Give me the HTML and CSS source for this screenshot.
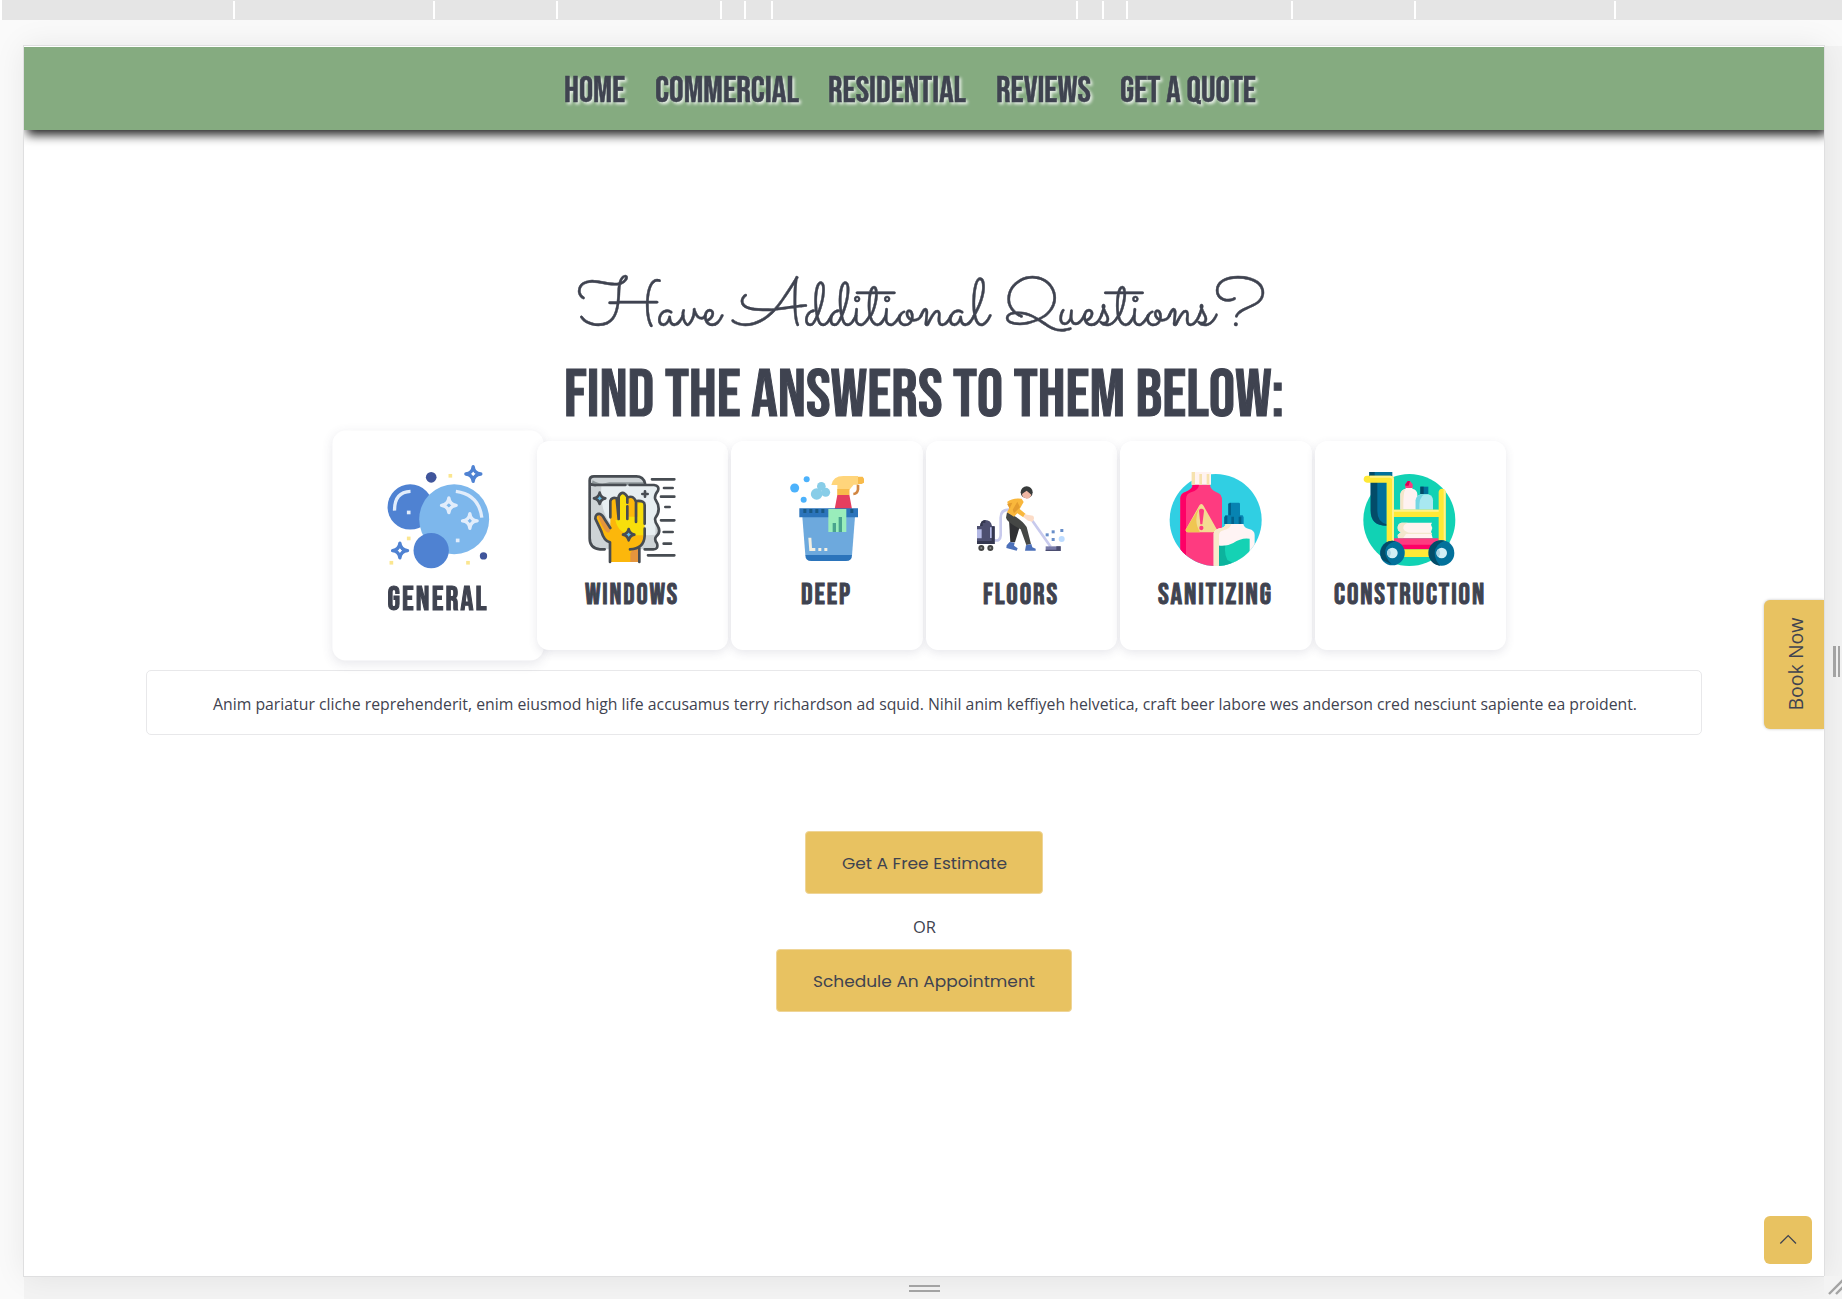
FILE: index.html
```html
<!DOCTYPE html>
<html lang="en">
<head>
<meta charset="utf-8">
<title>Cleaning Services - FAQ</title>
<link rel="stylesheet" href="styles.css">
</head>
<body>
<div class="ruler">
  <svg width="1842" height="20"><path class="tick" d="M1 0V20M234 1V19M434 1V19M557 1V19M721 1V19M745 1V19M772 1V19M1077 1V19M1103 1V19M1127 1V19M1292 1V19M1415 1V19M1615 1V19"/></svg>
</div>
<div class="stage">
  <div class="page">
    <header class="navbar">
      <a><svg width="61" height="30"><text y="27" textLength="61" lengthAdjust="spacingAndGlyphs">HOME</text></svg></a>
      <a><svg width="144" height="30"><text y="27" textLength="144" lengthAdjust="spacingAndGlyphs">COMMERCIAL</text></svg></a>
      <a><svg width="138" height="30"><text y="27" textLength="138" lengthAdjust="spacingAndGlyphs">RESIDENTIAL</text></svg></a>
      <a><svg width="95" height="30"><text y="27" textLength="95" lengthAdjust="spacingAndGlyphs">REVIEWS</text></svg></a>
      <a><svg width="136" height="30"><text y="27" textLength="136" lengthAdjust="spacingAndGlyphs">GET A QUOTE</text></svg></a>
    </header>
    <main>
      <h2 class="script"><svg width="1800" height="100" viewBox="24 250 1800 100">
        <text x="578" y="325" textLength="688" lengthAdjust="spacingAndGlyphs">Have Additional Questions?</text>
      </svg></h2>
      <h1 class="headline"><svg width="1800" height="91" viewBox="24 350 1800 91">
        <text x="564" y="416" textLength="720" lengthAdjust="spacingAndGlyphs">FIND THE ANSWERS TO THEM BELOW:</text>
      </svg></h1>
      <div class="cards">
        <div class="card active">
          <svg class="icon" viewBox="197 132 317 317">
            <circle cx="272" cy="259" r="68" fill="#4f82d2"/>
            <path d="M225 270Q224 214 273 212" fill="none" stroke="#e2edfb" stroke-width="10"/>
            <rect x="262" y="270" width="11" height="11" fill="#e2edfb"/>
            <circle cx="404" cy="296" r="105" fill="#7db7ec"/>
            <path d="M409 212Q478 221 487 291" fill="none" stroke="#e2edfb" stroke-width="10"/>
            <rect x="409" y="354" width="11" height="11" fill="#e2edfb"/>
            <circle cx="335" cy="390" r="53" fill="#4f82d2"/>
            <circle cx="335" cy="170" r="16" fill="#40559b"/><circle cx="492" cy="406" r="11" fill="#40559b"/>
            <g fill="#fbe68f"><rect x="387" y="160" width="11" height="11"/><rect x="262" y="348" width="11" height="11"/><rect x="210" y="421" width="11" height="11"/><rect x="440" y="421" width="11" height="11"/></g>
            <g fill="none" stroke="#4f82d2" stroke-width="10" stroke-linejoin="round"><path d="M461 138Q463 158 484 160Q463 162 461 182Q459 162 439 160Q459 158 461 138Z"/><path d="M241 368Q243 388 264 390Q243 392 241 412Q239 392 219 390Q239 388 241 368Z"/></g>
            <g fill="none" stroke="#e2edfb" stroke-width="10" stroke-linejoin="round"><path d="M388 232Q390 252 410 254Q390 256 388 276Q386 256 366 254Q386 252 388 232Z"/><path d="M451 279Q453 299 473 301Q453 303 451 323Q449 303 429 301Q449 299 451 279Z"/></g>
            <g fill="#fff"><circle cx="461" cy="160" r="4"/><circle cx="241" cy="390" r="4"/></g>
            <g fill="#7db7ec"><circle cx="388" cy="254" r="4"/><circle cx="451" cy="301" r="4"/></g>
          </svg>
          <svg class="label" width="92" height="30"><text y="25" textLength="92" lengthAdjust="spacingAndGlyphs">GENERAL</text></svg>
        </div>
        <div class="card">
          <svg class="icon" viewBox="794 156 288 288">
            <path d="M811 181V355Q811 388 842 388H1009Q1019 380 1013 370Q1002 360 1010 350Q1026 336 1017 322Q1004 308 1008 296Q1028 268 1016 248Q1004 236 1009 226Q1024 208 1011 196H978Q974 169 951 169H824Q811 169 811 181Z" fill="#cdd3d6"/>
            <path d="M846 198H1010Q1018 208 1008 226L1006 238Q1023 262 1009 292L1008 344Q960 350 900 330Q840 300 846 198Z" fill="#e7eef1"/>
            <path d="M820 181Q840 196 870 187H973V195H816Z" fill="#8f989b"/>
            <path d="M872 426V365Q854 357 848 333L829 290Q835 277 848 286L873 324V241Q884 222 897 238V226Q911 207 924 229Q940 224 949 244Q966 235 975 250V348Q974 370 960 381V426Z" fill="#fcb70b"/>
            <path d="M888 300Q896 344 947 346H975V250Q962 240 955 254V290H925V226Q911 207 900 229V300Z" fill="#f8df0b"/>
            <path d="M933 426V400Q937 388 960 380V426ZM836 286Q848 279 856 298L872 322Q874 344 861 335Q850 328 836 286Z" fill="#e4953d"/>
            <g fill="none" stroke="#474c52" stroke-width="8" stroke-linecap="round" stroke-linejoin="round">
              <path d="M856 388H842Q811 386 811 355V181Q811 169 824 169H951Q972 169 977 190M814 192Q819 196 832 195H918M931 195H1004Q1021 197 1016 212Q1004 228 1008 238Q1028 268 1008 294Q1005 302 1014 316Q1027 336 1010 350Q1004 359 1013 370Q1018 388 1002 388H976"/>
              <path d="M872 426V367Q854 363 846 334L828 296Q828 280 842 282Q850 284 856 298L873 324M873 292V243Q877 230 892 235L898 297V229Q909 208 924 230V248M924 259V297M925 233Q942 224 950 245V306M952 243Q976 241 976 255V311M976 326V348Q974 386 932 388M960 384V426"/>
              <path d="M998 178H1065M1034 204H1060M1025 230H1065M1038 261H1051M1025 301H1065M1033 336H1060M1033 371H1055M986 406H1065M977 214V230M969 222H985"/>
            </g>
            <g fill="#62bce9" stroke="#474c52" stroke-width="8" stroke-linejoin="round"><path d="M841 218Q844 232 858 235Q844 238 841 252Q838 238 824 235Q838 232 841 218Z"/><path d="M928 327Q931 341 945 344Q931 347 928 361Q925 347 911 344Q925 341 928 327Z"/></g>
          </svg>
          <svg class="label" width="94" height="30"><text y="25" textLength="94" lengthAdjust="spacingAndGlyphs">WINDOWS</text></svg>
        </div>
        <div class="card">
          <svg class="icon" viewBox="176 126 288 288">
            <g fill="#4cb2fc"><circle cx="223" cy="174" r="13.500"/><circle cx="259" cy="148" r="9"/><circle cx="250" cy="209" r="9"/></g>
            <g fill="#88cde8"><circle cx="289" cy="192" r="17.500"/><circle cx="303" cy="169" r="13"/><circle cx="316" cy="187" r="13.500"/></g>
            <path d="M351 194H387L395 237H343Z" fill="#e53f5f"/>
            <path d="M333 165Q338 138 369 138H413V164H400L387 180V194H351V165Z" fill="#ffd57b"/>
            <path d="M351 177H387V195H351ZM413 140H427L431 146V158L424 162H413Z" fill="#f8bb4b"/>
            <path d="M413 164V178Q411 191 399 192" fill="none" stroke="#d18641" stroke-width="8"/>
            <path d="M246 260H404L395 376H255Z" fill="#6da9dd"/>
            <path d="M255 375H395Q395 393 377 393H273Q255 393 255 375ZM237 235H413V262H237Z" fill="#2b74bb"/>
            <path d="M249 237h9v12h-9zM267 237h9v12h-9zM285 237h9v12h-9zM303 237h9v12h-9zM390 237h9v12h-9z" fill="#195985"/>
            <path d="M324 237H378V306H324Z" fill="#99edbb"/>
            <path d="M337 279h10v27h-10zM355 261h10v45h-10z" fill="#49a38e"/>
            <path d="M264 323H273L275 354H285V363H267ZM294 354h9v9h-9zM312 354h9v9h-9z" fill="#f4f0e2"/>
          </svg>
          <svg class="label" width="51" height="30"><text y="25" textLength="51" lengthAdjust="spacingAndGlyphs">DEEP</text></svg>
        </div>
        <div class="card">
          <svg class="icon" viewBox="760 126 288 288">
            <path d="M822 330Q842 336 843 316V263Q843 239 868 239" fill="none" stroke="#c8caed" stroke-width="8"/>
            <path d="M781 288Q783 270 797 270Q814 270 817 288H825V342H772V288Z" fill="#4d4f70"/>
            <path d="M816 290H825V342H772V333H816ZM781 288Q783 270 797 270V279H789V288Z" fill="#34374f"/>
            <path d="M772 298h14v27h-14zM811 292h5v32h-5z" fill="#b4b9e5"/>
            <g fill="#8b8d8c" stroke="#444545" stroke-width="6"><circle cx="785" cy="354" r="6"/><circle cx="812" cy="354" r="6"/></g>
            <path d="M938 272L993 350" stroke="#c8caed" stroke-width="8"/>
            <path d="M978 349h45v14h-45z" fill="#777aa7"/><path d="M1010 349h13v14h-45v-4h32z" fill="#4b4d70"/>
            <path d="M868 270L872 337H886L901 288Z" fill="#303134"/>
            <path d="M862 247L859 263Q861 276 903 298L920 345L934 342L921 291Q909 272 883 257Z" fill="#454745"/>
            <path d="M870 336L885 338L883 347L894 355L891 362L860 354L861 346ZM919 346L935 342L938 352L948 356V362H916Z" fill="#4c70b9"/>
            <path d="M862 216Q878 203 906 206L912 216L900 237L918 252L911 262L893 250L883 260L862 247L872 229Z" fill="#f9b73c"/>
            <path d="M893 215L901 232L883 250L879 239ZM862 221L870 236L878 218Z" fill="#e49c2e"/>
            <path d="M915 253L940 257Q947 264 938 275L925 272L911 261Z" fill="#fcdcc7"/>
            <circle cx="921" cy="187" r="18" fill="#383b3b"/><path d="M910 190L921 182L935 194Q932 205 922 206Q908 204 907 193Z" fill="#efb7a4"/>
            <g fill="#688ec9"><rect x="978" y="310" width="9" height="9"/><rect x="996" y="301" width="9" height="9"/><rect x="996" y="324" width="9" height="9"/><rect x="1022" y="297" width="9" height="9"/></g><circle cx="1026" cy="327" r="9" fill="#bddcff"/>
          </svg>
          <svg class="label" width="76" height="30"><text y="25" textLength="76" lengthAdjust="spacingAndGlyphs">FLOORS</text></svg>
        </div>
        <div class="card">
          <svg class="icon" viewBox="174 126 288 288">
            <defs><clipPath id="round-a"><path d="M179 120H334V200H455V270A138 138 0 0 1 179 270Z"/></clipPath></defs>
            <circle cx="317" cy="270" r="138" fill="#30cfe3"/>
            <g clip-path="url(#round-a)">
              <path d="M211 420V205Q211 190 228 185Q248 178 248 163H300Q300 178 318 186Q336 192 336 207V420Z" fill="#fe3b80"/>
              <path d="M211 420V205Q211 190 228 185Q248 178 248 163H267Q268 180 243 187Q229 191 228 207V420Z" fill="#fe0066"/>
              <path d="M245 126H303V164H245Z" fill="#fff3f1"/><path d="M245 126h10v38h-10zM268 132h8v32h-8zM290 132h8v32h-8z" fill="#f6e2ae"/>
              <path d="M274 222Q278 222 281 228L322 301Q321 307 315 307H233Q226 305 227 299L267 228Q270 222 274 222Z" fill="#f4dc91"/>
              <path d="M274 222Q246 268 270 307H233Q226 305 227 299Z" fill="#efc652"/>
              <path d="M267 242Q267 236 274 236Q282 236 282 242L277 283H271Z" fill="#fe3b80"/><circle cx="274" cy="294" r="6.500" fill="#fe3b80"/>
              <path d="M311 420V310Q314 299 329 295Q346 292 347 282H400Q402 294 417 297Q434 301 434 315V420Z" fill="#fff4f4"/>
              <path d="M311 420V310Q314 299 329 295Q346 292 347 282H364Q361 296 341 301Q327 304 327 316V420Z" fill="#f7e9cb"/>
              <path d="M327 347Q350 350 370 339Q394 322 419 326V420H327Z" fill="#15d2b4"/><path d="M327 347H346Q342 370 352 390L370 400V420H327Z" fill="#0cb39d"/>
              <path d="M355 222Q355 218 360 218H386Q390 218 390 222V256H398L401 262V282H343V262L346 256H355Z" fill="#0783b2"/><path d="M355 222L363 218V256H355ZM343 262L346 257H352V282H343ZM364 260h8v22h-8zM386 260h8v22h-8z" fill="#02618a"/>
            </g>
          </svg>
          <svg class="label" width="115" height="30"><text y="25" textLength="115" lengthAdjust="spacingAndGlyphs">SANITIZING</text></svg>
        </div>
        <div class="card">
          <svg class="icon" viewBox="758 126 288 288">
            <circle cx="900" cy="270" r="138" fill="#11d2b4"/>
            <path d="M784 156H832V287Q784 287 784 242Z" fill="#02719b"/><path d="M784 156H804V244Q804 276 832 283V287Q784 287 784 242Z" fill="#034c69"/>
            <path d="M780 126H849V140H780Z" fill="#02719b"/><path d="M780 126h16v12h-16z" fill="#034c69"/>
            <path d="M873 239V193Q874 180 889 176V172H909V176Q924 180 924 193V239Z" fill="#fff2f1"/><path d="M873 239V193Q874 182 888 178Q881 188 882 239Z" fill="#f5e6ca"/>
            <path d="M888 174V163L895 153H902L910 163V174Z" fill="#fe3b80"/><path d="M888 163L895 153H902L898 167H888Z" fill="#da0055"/>
            <path d="M919 239V211Q920 198 934 193H957Q971 198 971 211V239Z" fill="#a8e8f1"/><path d="M919 239V211Q920 198 937 193H945Q928 202 930 239Z" fill="#76d6e3"/><path d="M933 170h24v22h-24z" fill="#02719b"/><path d="M933 170h10v22h-10z" fill="#034c69"/>
            <path d="M877 278H968L965 284L969 294L965 306L970 325H866L865 315L875 306Q864 304 865 291Q866 280 877 278Z" fill="#fff3ef"/>
            <path d="M877 278H895Q880 284 882 296Q887 307 905 308H968V312H890L881 325H866L865 315L875 306Q864 304 865 291Q866 280 877 278Z" fill="#f3e7cc"/>
            <path d="M853 325H988V347H853Z" fill="#fe3b80"/><path d="M853 344H988V358H853Z" fill="#fe0066"/>
            <path d="M885 358H965V381H885Z" fill="#ffe936"/>
            <path d="M773 137H843Q854 137 854 148V340H832V158H773Q763 157 763 148Q763 138 773 137ZM854 239H988V261H854ZM988 185Q990 176 998 176Q1009 177 1009 186V340H988Z" fill="#ffe936"/>
            <path d="M782 137H843Q854 137 854 148V340H848V148Q848 143 840 143H782ZM854 239H988V245H854ZM1003 178Q1009 181 1009 186V340H1003Z" fill="#fff28b"/>
            <g fill="#02719b"><circle cx="849" cy="369" r="37"/><circle cx="997" cy="369" r="38"/></g>
            <g fill="#034c69"><path d="M849 332A37 37 0 0 0 820 390L847 403Q825 381 828 360Q833 339 859 334ZM997 331A38 38 0 0 0 993 407Q976 391 976 368Q978 341 1006 332Z"/></g>
            <g fill="#d2eff5"><circle cx="849" cy="369" r="16"/><circle cx="997" cy="369" r="16"/></g><path d="M839 357Q850 369 839 381A16 16 0 0 1 839 357ZM987 357Q998 369 987 381A16 16 0 0 1 987 357Z" fill="#a9d3e4"/>
          </svg>
          <svg class="label" width="152" height="30"><text y="25" textLength="152" lengthAdjust="spacingAndGlyphs">CONSTRUCTION</text></svg>
        </div>
      </div>
      <div class="answer"><svg width="1424" height="30"><text y="21" textLength="1424" lengthAdjust="spacingAndGlyphs">Anim pariatur cliche reprehenderit, enim eiusmod high life accusamus terry richardson ad squid. Nihil anim keffiyeh helvetica, craft beer labore wes anderson cred nesciunt sapiente ea proident.</text></svg></div>
      <div class="actions">
        <a class="button estimate"><svg width="165" height="30"><text y="21" textLength="165" lengthAdjust="spacingAndGlyphs">Get A Free Estimate</text></svg></a>
        <p class="or"><svg width="23" height="30"><text y="21" textLength="23" lengthAdjust="spacingAndGlyphs">OR</text></svg></p>
        <a class="button schedule"><svg width="222" height="30"><text y="21" textLength="222" lengthAdjust="spacingAndGlyphs">Schedule An Appointment</text></svg></a>
      </div>
    </main>
    <a class="book"><svg width="60" height="129"><text transform="translate(39 110.500) rotate(-90)" textLength="93" lengthAdjust="spacingAndGlyphs">Book Now</text></svg></a>
    <a class="to-top"><svg width="48" height="48"><path d="M16.300 27.500L24.200 19.600L32 27.500" fill="none" stroke="#3f4350" stroke-width="1.300"/></svg></a>
  </div>
  <div class="handle-right"><i></i><i></i></div>
  <div class="handle-bottom"><i></i><i></i></div>
  <div class="corner"><svg width="18" height="23"><path d="M5 18L20 3M12 18L20 10" stroke="#a3a3a3" stroke-width="2.400"/></svg></div>
</div>
</body>
</html>
```
FILE: styles.css
```css
html, body { margin: 0; height: 100%; overflow: hidden; }
body { display: flex; flex-direction: column; background: #fafafa; color: #3f4350; font-family: "Segoe UI", "Open Sans", sans-serif; }
svg { display: block; overflow: visible; }
svg text { fill: #3f4350; }
h1, h2, p { margin: 0; }

.ruler { position: relative; z-index: 2; height: 20px; background: #e5e5e5; }
.tick { stroke: #fff; stroke-width: 2; }

.stage { display: grid; grid-template-columns: 1800px 18px; grid-template-rows: 1230px 23px; padding: 26px 0 0 24px; }
.page { position: relative; z-index: 1; background: #fff; box-shadow: 0 0 0 1px #dfdfe0, 0 0 30px rgba(0,0,0,.08); }
.handle-right { background: #f3f3f3; display: flex; align-items: center; justify-content: flex-end; gap: 2px; padding-right: 2px; }
.handle-right i { position: relative; z-index: 2; width: 2.500px; height: 31px; background: #a3a3a3; }
.handle-bottom { background: #f3f3f3; display: flex; flex-direction: column; align-items: center; gap: 3px; padding-top: 9px; }
.handle-bottom i { position: relative; z-index: 2; width: 31px; height: 2px; background: #a3a3a3; }
.corner { background: #f3f3f3; position: relative; z-index: 2; }

.navbar { transform: translateY(1px); height: 83px; box-sizing: border-box; padding: 28px 0 0 540px; display: flex; gap: 29.600px; background: #85ab80; box-shadow: 3px 5px 10px rgba(0,0,0,.87); clip-path: inset(0 0 -24px 0); }
.navbar text { font: 400 37px "Bebas Neue", Oswald, Roboto, sans-serif; stroke: #3f4350; stroke-width: .5px; }
.navbar svg { filter: drop-shadow(2px 2px 1.500px rgba(255,255,255,.8)); }

.script { margin-top: 121px; }
.script text { font: 400 66px Sacramento, Parisienne, Lato, sans-serif; stroke: #3f4350; stroke-width: .4px; }
.headline text { font: 400 67px "Bebas Neue", Oswald, Roboto, sans-serif; stroke: #3f4350; stroke-width: 1px; }

.cards { display: grid; grid-template-columns: repeat(6, 191.600px); gap: 2.900px; padding-left: 318.300px; }
.card { height: 209px; box-sizing: border-box; padding: 31px 1px 0 0; display: flex; flex-direction: column; align-items: center; background: #fff; border-radius: 12px; box-shadow: 0 3px 10px rgba(62,66,100,.12); position: relative; }
.card.active { transform: scale(1.1); padding-right: 0; padding-left: 1px; }
.icon { width: 96px; height: 96px; overflow: hidden; }
.label { margin-top: 11.300px; }
.label text { font: 400 30px "Bebas Neue", Oswald, Roboto, sans-serif; letter-spacing: 2px; stroke: #3f4350; stroke-width: 1px; }

.answer { margin: 20px 0 0 122px; width: 1556px; height: 65px; box-sizing: border-box; border: 1px solid #e8e8ea; border-radius: 5px; padding: 18px 0 0 65.500px; }
.answer text, .or text { font: 400 16.800px "Segoe UI", "Open Sans", sans-serif; }

.actions { display: flex; flex-direction: column; align-items: center; padding-top: 96px; }
.button { height: 63px; box-sizing: border-box; padding-top: 16px; display: flex; justify-content: center; background: #e8c261; border: 1px solid #efd597; border-radius: 4px; }
.button text { font: 400 16.500px Poppins, Inter, sans-serif; }
.estimate { width: 238px; }
.schedule { width: 296px; }
.or { height: 37px; padding-top: 18px; }

.book { position: absolute; right: 0; top: 553.500px; width: 60px; height: 129px; background: #e8c261; border-radius: 6px 0 0 6px; box-shadow: 0 0 3px rgba(0,0,0,.25); clip-path: inset(-4px 0 -4px -4px); }
.book text { font: 400 20px "Open Sans", sans-serif; }
.to-top { position: absolute; left: 1740px; top: 1170px; width: 48px; height: 48px; background: #e8c261; border-radius: 6px; }
```
